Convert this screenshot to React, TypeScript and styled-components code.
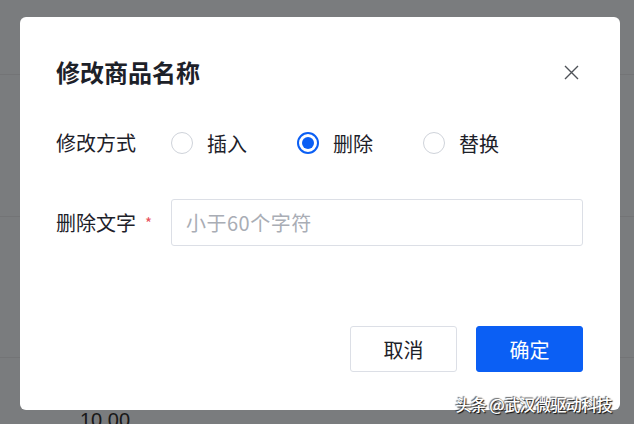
import styled, { createGlobalStyle } from 'styled-components';

const GlobalStyle = createGlobalStyle`
  html, body {
    margin: 0;
    padding: 0;
  }
  body {
    font-family: "Noto Sans CJK SC", "Noto Sans", sans-serif;
    background: #f5f8fc;
  }
  * {
    box-sizing: border-box;
  }
`;

const Page = styled.div`
  position: relative;
  width: 634px;
  height: 424px;
  overflow: hidden;
  background: #f5f8fc;
`;

const TableRow = styled.div<{ $h: number }>`
  height: ${(p) => p.$h}px;
  border-bottom: 1px solid #e6e8ec;
`;

const LastRow = styled.div`
  padding: 50px 0 0 80px;
  font-family: "Liberation Sans", sans-serif;
  font-size: 20px;
  line-height: 24px;
  color: #333;
`;

const Overlay = styled.div`
  position: absolute;
  inset: 0;
  background: rgba(0, 0, 0, 0.5);
  padding: 17px 0 0 20px;
`;

const Modal = styled.div`
  width: 600px;
  height: 393px;
  background: #fff;
  border-radius: 6px;
  padding: 39px 37px 38px 36px;
  display: flex;
  flex-direction: column;
`;

const Header = styled.div`
  display: flex;
  align-items: center;
  justify-content: space-between;
  height: 32px;
`;

const Title = styled.h2`
  margin: 0;
  font-size: 24px;
  font-weight: 600;
  color: #1d2129;
  line-height: 32px;
`;

const CloseButton = styled.button`
  border: none;
  background: none;
  padding: 0;
  margin-right: 4px;
  width: 16px;
  height: 16px;
  display: flex;
  align-items: center;
  justify-content: center;
  cursor: pointer;
`;

const FormRow = styled.div<{ $top: number }>`
  display: flex;
  align-items: center;
  margin-top: ${(p) => p.$top}px;
`;

const Label = styled.div`
  width: 115px;
  flex-shrink: 0;
  display: flex;
  align-items: center;
  font-size: 20px;
  color: #1d2129;
  line-height: 40px;
`;

const Required = styled.span`
  color: #e8505b;
  font-size: 15px;
  margin-left: 9px;
`;

const RadioGroup = styled.div`
  display: flex;
  align-items: center;
  gap: 50px;
  height: 40px;
`;

const RadioItem = styled.label`
  display: flex;
  align-items: center;
  gap: 14px;
  font-size: 20px;
  color: #1d2129;
  cursor: pointer;
`;

const RadioCircle = styled.span<{ $checked?: boolean }>`
  width: 22px;
  height: 22px;
  border-radius: 50%;
  border: ${(p) => (p.$checked ? '2px solid #0b5ff4' : '1px solid #cfd3da')};
  display: flex;
  align-items: center;
  justify-content: center;

  &::after {
    content: '';
    display: ${(p) => (p.$checked ? 'block' : 'none')};
    width: 12px;
    height: 12px;
    border-radius: 50%;
    background: #0b5ff4;
  }
`;

const Input = styled.input`
  width: 412px;
  height: 47px;
  border: 1px solid #dcdfe6;
  border-radius: 3px;
  padding: 0 14px;
  font-family: inherit;
  font-size: 20px;
  letter-spacing: 0.5px;
  color: #1d2129;
  outline: none;

  &::placeholder {
    color: #a9adb5;
  }
`;

const Footer = styled.div`
  margin-top: auto;
  display: flex;
  justify-content: flex-end;
  gap: 19px;
`;

const Button = styled.button<{ $primary?: boolean }>`
  width: 107px;
  height: 46px;
  border-radius: 3px;
  font-family: inherit;
  font-size: 20px;
  cursor: pointer;
  border: 1px solid ${(p) => (p.$primary ? '#0b5ff4' : '#dcdfe6')};
  background: ${(p) => (p.$primary ? '#0b5ff4' : '#fff')};
  color: ${(p) => (p.$primary ? '#fff' : '#1d2129')};
`;

const Watermark = styled.div`
  position: absolute;
  right: 22px;
  bottom: 10px;
  font-size: 16px;
  font-weight: 500;
  letter-spacing: -0.6px;
  color: #fff;
  line-height: 20px;
  text-shadow: 1px 1px 1px rgba(0, 0, 0, 0.9), -1px -1px 1px rgba(0, 0, 0, 0.6);
  white-space: nowrap;
`;

const options = [
  { label: '插入', checked: false },
  { label: '删除', checked: true },
  { label: '替换', checked: false },
];

export default function App() {
  return (
    <>
      <GlobalStyle />
      <Page>
        <TableRow $h={75} />
        <TableRow $h={142} />
        <TableRow $h={141} />
        <LastRow>10.00</LastRow>
        <Overlay>
          <Modal>
            <Header>
              <Title>修改商品名称</Title>
              <CloseButton aria-label="关闭">
                <svg width="15" height="15" viewBox="0 0 15 15">
                  <path d="M1 1L14 14M14 1L1 14" stroke="#4e5258" strokeWidth="1.4" fill="none" />
                </svg>
              </CloseButton>
            </Header>
            <FormRow $top={35}>
              <Label>修改方式</Label>
              <RadioGroup>
                {options.map((o) => (
                  <RadioItem key={o.label}>
                    <RadioCircle $checked={o.checked} />
                    {o.label}
                  </RadioItem>
                ))}
              </RadioGroup>
            </FormRow>
            <FormRow $top={36}>
              <Label>
                删除文字<Required>*</Required>
              </Label>
              <Input placeholder="小于60个字符" />
            </FormRow>
            <Footer>
              <Button>取消</Button>
              <Button $primary>确定</Button>
            </Footer>
          </Modal>
        </Overlay>
        <Watermark>头条 @武汉微驱动科技</Watermark>
      </Page>
    </>
  );
}
